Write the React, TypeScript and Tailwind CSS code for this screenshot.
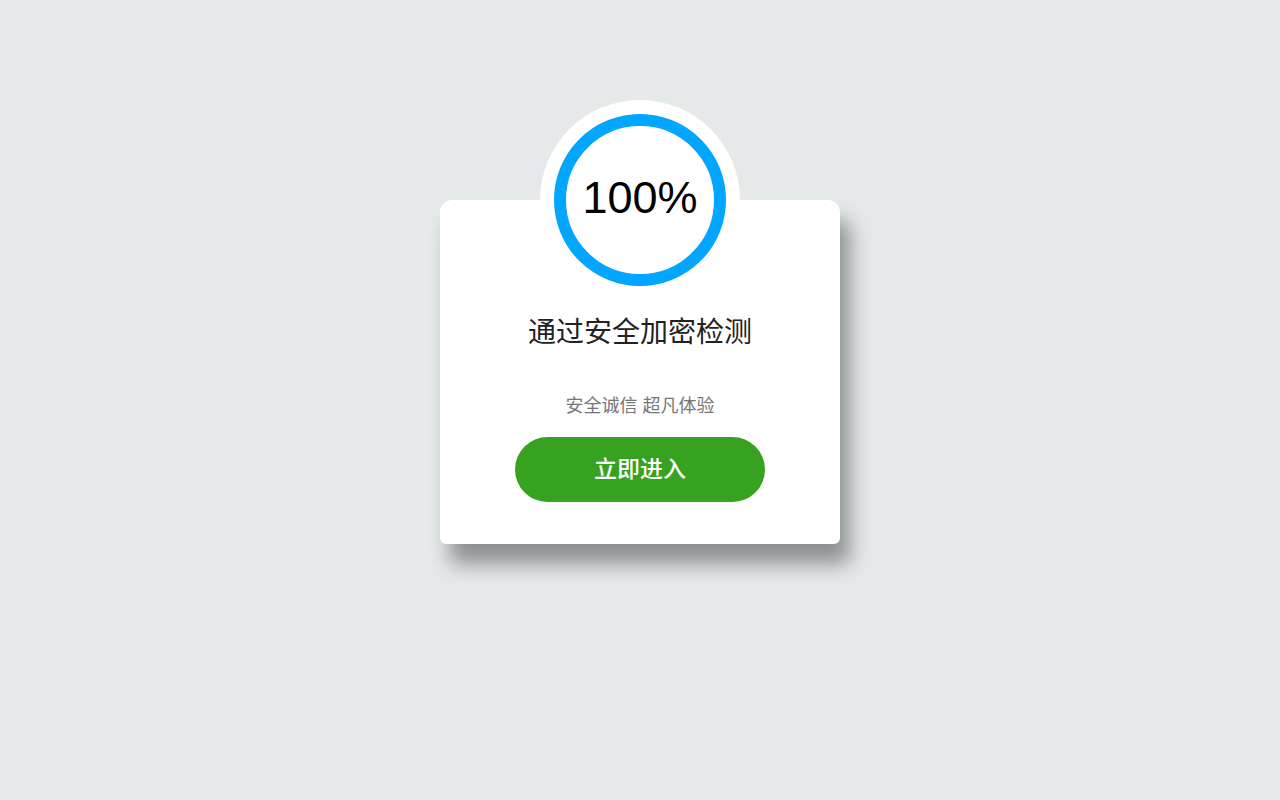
import React from 'react';

const cjk = { fontFamily: '"Liberation Sans", "Noto Sans CJK SC", sans-serif' };

const ProgressRing = ({ value }: { value: number }) => (
  <div className="-mt-[100px] mx-auto w-[200px] h-[200px] rounded-full bg-white p-[14px]">
    <div className="w-full h-full rounded-full border-[12px] border-[#02a6fe] flex items-center justify-center">
      <span className="text-[45px] leading-none text-black pb-[6px]" style={{ fontFamily: '"Liberation Sans", Arial, sans-serif' }}>
        {value}%
      </span>
    </div>
  </div>
);

const App = () => {
  return (
    <div className="min-h-screen w-full bg-[#e5e9ea] pt-[200px]" style={cjk}>
      <div className="mx-auto w-[400px] bg-white rounded-t-xl rounded-b-md shadow-[10px_20px_20px_rgba(0,0,0,0.38)] flex flex-col items-center pb-[42px]">
        <ProgressRing value={100} />
        <h1 className="mt-[12px] text-[28px] leading-[42px] text-[#222]">通过安全加密检测</h1>
        <p className="mt-[39px] text-[18px] leading-[27px] text-[#777]">安全诚信 超凡体验</p>
        <button className="mt-[17px] w-[250px] h-[65px] rounded-full bg-[#36a21f] text-white text-[23px] font-medium">
          立即进入
        </button>
      </div>
    </div>
  );
};

export default App;
